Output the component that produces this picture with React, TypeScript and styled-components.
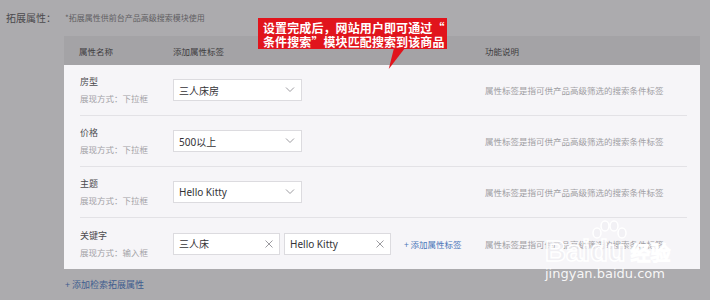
import styled, { createGlobalStyle } from 'styled-components'

const GlobalStyle = createGlobalStyle`
    html, body {
        margin: 0;
        padding: 0;
        background: #acabae;
    }
    body {
        font-family: "Noto Sans CJK SC", "Noto Sans", sans-serif;
        width: 710px;
        height: 300px;
        overflow: hidden;
    }
`

const Page = styled.div`
    position: relative;
    width: 710px;
    height: 300px;
    background: #acabae;
`

const TitleBar = styled.div`
    display: flex;
    align-items: center;
    height: 36px;
    padding: 0 0 2px 6px;
    box-sizing: border-box;
`

const Title = styled.span`
    width: 59px;
    font-size: 10px;
    color: #4a494c;
`

const Note = styled.span`
    font-size: 8px;
    color: #5f5e62;
`

const Panel = styled.div`
    margin-left: 64px;
    width: 636px;
`

const HeadRow = styled.div`
    display: grid;
    grid-template-columns: 94px 312px 1fr;
    align-items: center;
    height: 29px;
    padding-left: 15px;
    background: #a4a3a6;
    font-size: 8.5px;
    color: #3d3c40;
`

const Body = styled.div`
    background: #f6f5f8;
    padding: 0 13px 0 16px;
`

const Row = styled.div<{ $last?: boolean }>`
    display: grid;
    grid-template-columns: 93px 312px 1fr;
    align-items: center;
    height: ${(p) => (p.$last ? 51 : 50)}px;
    border-bottom: ${(p) => (p.$last ? 'none' : '1px solid #e3e2e6')};
`

const Name = styled.div`
    display: flex;
    flex-direction: column;
    font-size: 9px;
    line-height: 16px;
    color: #4b4a4e;

    span {
        font-size: 8.5px;
        color: #a3a2a6;
    }
`

const Controls = styled.div`
    display: flex;
    align-items: center;
    gap: 4px;
`

const Box = styled.div<{ $w: number }>`
    display: flex;
    align-items: center;
    justify-content: space-between;
    box-sizing: border-box;
    width: ${(p) => p.$w}px;
    height: 22px;
    padding: 0 6px 0 5px;
    background: #ffffff;
    border: 1px solid #dcdbdf;
    font-size: 10px;
    color: #333236;
    font-family: "Noto Sans", "Noto Sans CJK SC", sans-serif;
`

const Mark = styled.svg`
    flex: none;
    stroke: #9c9ba0;
    fill: none;
    stroke-width: 1;
`

const AddTag = styled.span`
    margin-left: 9px;
    font-size: 8.5px;
    color: #4d78b8;
`

const Desc = styled.div`
    font-size: 8.5px;
    color: #9f9ea3;
`

const AddAttr = styled.div`
    padding: 9px 0 0 65px;
    font-size: 9px;
    color: #3f5d8e;
`

const Callout = styled.div`
    position: absolute;
    left: 258px;
    top: 18px;
    width: 189px;
    height: 31px;
    box-sizing: border-box;
    padding: 3px 0 0 5px;
    background: #e1141c;
    color: #ffffff;
    font-size: 12px;
    font-weight: bold;
    line-height: 14px;
    letter-spacing: 0.1px;
    white-space: nowrap;

    &::after {
        content: '';
        position: absolute;
        left: 136px;
        top: 30px;
        border-left: 11px solid #e1141c;
        border-bottom: 21px solid transparent;
        transform: skewX(-14deg);
        transform-origin: top left;
        width: 0;
        height: 0;
    }
`

const Watermark = styled.div`
    position: absolute;
    left: 545px;
    top: 220px;
    display: flex;
    flex-direction: column;
    align-items: flex-start;
    pointer-events: none;
`

const Logo = styled.div`
    position: relative;
    display: flex;
    align-items: flex-end;
    height: 46px;
    font-family: "Liberation Sans", sans-serif;
    font-size: 29px;
    font-weight: bold;
    line-height: 29px;
    color: rgba(238, 237, 241, 0.7);
    -webkit-text-stroke: 1.5px #ffffff;

    em {
        font-style: normal;
        font-weight: normal;
        font-family: "Noto Sans CJK SC", sans-serif;
        font-size: 20px;
        line-height: 27px;
        margin-left: 5px;
    }
`

const Paw = styled.svg`
    position: absolute;
    left: 44px;
    top: 0;
    fill: rgba(238, 237, 241, 0.5);
    stroke: #ffffff;
    stroke-width: 1.5;
`

const Site = styled.div`
    font-family: "DejaVu Sans", sans-serif;
    font-size: 13px;
    line-height: 16px;
    color: rgba(255, 255, 255, 0.92);
`

const Chevron = () => (
    <Mark width="10" height="6" viewBox="0 0 10 6">
        <path d="M1 0.5 L5 4.5 L9 0.5" />
    </Mark>
)

const Clear = () => (
    <Mark width="8" height="8" viewBox="0 0 8 8">
        <path d="M0.5 0.5 L7.5 7.5 M7.5 0.5 L0.5 7.5" />
    </Mark>
)

const DESC = '属性标签是指可供产品高级筛选的搜索条件标签'

const rows = [
    { name: '房型', mode: '下拉框', value: '三人床房' },
    { name: '价格', mode: '下拉框', value: '500以上' },
    { name: '主题', mode: '下拉框', value: 'Hello Kitty' },
]

export default function App() {
    return (
        <Page>
            <GlobalStyle />
            <TitleBar>
                <Title>拓展属性：</Title>
                <Note>*拓展属性供前台产品高级搜索模块使用</Note>
            </TitleBar>
            <Panel>
                <HeadRow>
                    <span>属性名称</span>
                    <span>添加属性标签</span>
                    <span>功能说明</span>
                </HeadRow>
                <Body>
                    {rows.map((r) => (
                        <Row key={r.name}>
                            <Name>
                                {r.name}
                                <span>展现方式：{r.mode}</span>
                            </Name>
                            <Controls>
                                <Box $w={129}>
                                    {r.value}
                                    <Chevron />
                                </Box>
                            </Controls>
                            <Desc>{DESC}</Desc>
                        </Row>
                    ))}
                    <Row $last>
                        <Name>
                            关键字
                            <span>展现方式：输入框</span>
                        </Name>
                        <Controls>
                            <Box $w={107}>
                                三人床
                                <Clear />
                            </Box>
                            <Box $w={107}>
                                Hello Kitty
                                <Clear />
                            </Box>
                            <AddTag>+ 添加属性标签</AddTag>
                        </Controls>
                        <Desc>{DESC}</Desc>
                    </Row>
                </Body>
            </Panel>
            <AddAttr>+ 添加检索拓展属性</AddAttr>
            <Callout>
                设置完成后，网站用户即可通过“
                <br />
                条件搜索”模块匹配搜索到该商品
            </Callout>
            <Watermark>
                <Logo>
                    <Paw width="40" height="20" viewBox="0 0 40 20">
                        <ellipse cx="8" cy="13" rx="4" ry="5" />
                        <ellipse cx="16" cy="6" rx="4" ry="5" />
                        <ellipse cx="25" cy="6" rx="4" ry="5" />
                        <ellipse cx="33" cy="13" rx="4" ry="5" />
                    </Paw>
                    Bai
                    <span>du</span>
                    <em>经验</em>
                </Logo>
                <Site>jingyan.baidu.com</Site>
            </Watermark>
        </Page>
    )
}
